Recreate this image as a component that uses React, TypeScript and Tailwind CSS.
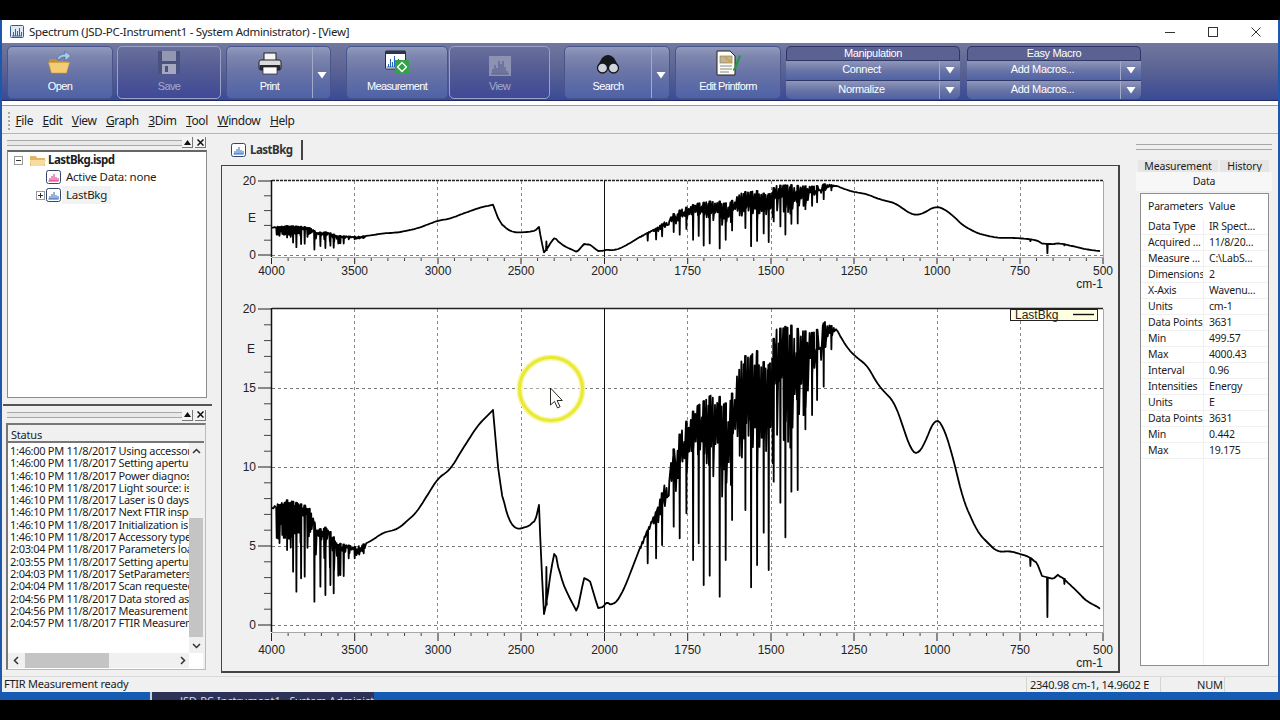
import React from "react";

// ---------- spectrum data (page pixel coordinates of the large plot) ----------
const envPts: [number, number][] = [
  [272,505],[287,500],[310,507],[316,530],[327,527],[337,543],[355,547],[370,542],[382,533],[398,529],[417,512],[438,478],[450,470],[462,450],[478,425],[493,410],
  [498,467],[502,495],[507,517],[513,527],[518,530],[527,526],[532,526],[536,518],[539,505],[541,557],[544,614],[547,600],[551,570],[555,550],[560,577],[568,595],[577,612],[584,578],[590,581],[598,608],[603,607],[607,602],[613,607],[623,592],[643,540],[658,507],[667,473],[675,443],[685,423],[695,408],[707,398],[715,392],[727,405],[735,385],[742,355],[750,357],[755,350],[760,353],[767,372],[775,330],[790,325],[800,330],[813,333],[825,322],[837,330],[847,348],[857,358],[867,365],[878,385],[895,403],[903,427],[912,453],[918,455],[925,443],[935,417],[943,425],[953,457],[963,500],[978,533],[997,552],[1010,551],[1030,557],[1037,563],[1042,576],[1046,577],[1053,579],[1059,574],[1068,583],[1078,592],[1087,602],[1093,604],[1102,610],
];
const interp = (t: [number, number][], x: number) => {
  for (let i = 1; i < t.length; i++) if (x <= t[i][0]) {
    const [a, b] = t[i - 1]; const [c, d] = t[i];
    return b + ((d - b) * (x - a)) / (c - a);
  }
  return t[t.length - 1][1];
};
const smoothZones = [[360,486],[503,534],[560,573],[610,640],[840,1036],[1060,1100]];
const envAt = (x: number) => {
  if (!smoothZones.some(([a, b]) => x >= a && x <= b)) return interp(envPts, x);
  let s = 0;
  for (let k = -5; k <= 5; k++) s += interp(envPts, x + k);
  return s / 11;
};
const solid: [number, number][] = [[640,560],[660,520],[670,500],[700,490],[730,500],[745,500],[770,470],[790,450],[810,400],[822,360],[832,335]];
const spikes: [number, number][] = [
  ...[[80,480],[98,545],[108,605],[122,565],[133,560],[162,635],[180,590],[195,615],[210,585],[220,610],[240,555],[250,558],[265,505],[283,505],[310,490]].map(([a, b]) => [260 + a / 3, 390 + b / 3] as [number, number]),
  [546,567],[1030,566],[1047,617],[1064,584],
  ...[[22,760],[47,745],[65,705],[100,650],[118,685],[138,610],[158,750],[175,700],[190,825],[208,797],[238,860],[256,750],[275,630],[315,600],[332,832],[350,765],[370,668],[385,780],[400,515],[420,578],[435,682],[453,545],[472,540],[495,358],[515,315],[530,270],[550,230],[573,118]].map(([a, b]) => [640 + a / 3, 310 + b / 3] as [number, number]),
];
let seed = 17;
const rnd = () => { seed = (seed * 16807) % 2147483647; return (seed % 1000) / 1000; };
const build = () => {
  const ev: { x: number; y: number | null }[] = spikes.map(([x, y]) => ({ x, y }));
  for (let x = 272; x <= 1102; x += x > 640 && x < 835 ? 2.2 : x < 360 ? 1.4 : 2) ev.push({ x, y: null });
  ev.push({ x: 493, y: null }, { x: 539, y: null }, { x: 544, y: null });
  ev.sort((a, b) => a.x - b.x);
  const out: [number, number][] = [];
  for (const { x, y } of ev) {
    const e = envAt(x);
    if (y !== null) { out.push([x, e], [x + 0.4, y], [x + 0.8, e]); continue; }
    let low = e;
    if (x >= 276 && x < 310) low = e + 8 + rnd() * 40;
    else if (x >= 310 && x < 340) low = e + rnd() * 38;
    else if (x >= 340 && x < 365) low = e + rnd() * 10;
    else if (x >= 652 && x < 835) low = e + (0.35 + rnd() * 0.65) * Math.max(0, interp(solid, x) - e);
    else if (x >= 640 && x < 652) low = e + rnd() * 6;
    const dense = x > 660 && x < 830;
    out.push([x, e + (dense ? rnd() * rnd() * 32 : x < 365 ? rnd() * 4 : 0)]);
    if (low !== e) out.push([x + 0.5, low]);
  }
  return out;
};
const data = build();
const bigLine = data.map(([x, y]) => `${x.toFixed(1)},${y.toFixed(1)}`).join(" ");
const smallLine = data.map(([x, y]) => `${x.toFixed(1)},${(181 + ((y - 309) * 74) / 316).toFixed(1)}`).join(" ");

const xLabels: [number, string][] = [[271.5,"4000"],[354.7,"3500"],[438,"3000"],[521,"2500"],[604.5,"2000"],[687.7,"1750"],[771,"1500"],[854,"1250"],[937,"1000"],[1020,"750"],[1103,"500"]];
const gridX = [354.5, 437.5, 521.5, 687.5, 771.5, 854.5, 937.5, 1020.5];
const minorX = Array.from({ length: 51 }, (_, i) => 271.5 + i * 16.63).filter((_, i) => i % 5 !== 0);

function Plot({ top, zero, bottom, axisY, labelY, cmY, big }: { top: number; zero: number; bottom: number; axisY: number; labelY: number; cmY: number; big: boolean }) {
  const h = zero - top;
  const tickYs = Array.from({ length: big ? 21 : 6 }, (_, i) => top + (i * h) / (big ? 20 : 5));
  const majors = big ? [0, 5, 10, 15, 20] : [0, 5];
  const hGrid = big ? [388.5, 467.5, 546.5, 625.5] : [zero + 0.5];
  return (
    <g>
      <rect x={272} y={top} width={831} height={bottom - top} fill="#fff" />
      <line x1={1103.5} x2={1103.5} y1={top} y2={bottom} stroke="#a8a8a8" />
      <line x1={272} x2={1104} y1={bottom + 0.5} y2={bottom + 0.5} stroke="#a8a8a8" />
      {gridX.map((x) => <line key={x} x1={x} x2={x} y1={top} y2={bottom} stroke="#8a8a8a" strokeDasharray="3 3" />)}
      {hGrid.map((y) => <line key={y} x1={272} x2={1103} y1={y} y2={y} stroke="#7a7a7a" strokeDasharray="3 3" />)}
      <line x1={272} x2={1103} y1={top - 0.5} y2={top - 0.5} stroke="#222" strokeWidth={1.6} strokeDasharray={big ? undefined : "3 1"} />
      <line x1={604.5} x2={604.5} y1={big ? top - 1 : top} y2={bottom} stroke="#111" />
      <polyline points={big ? bigLine : smallLine} fill="none" stroke="#000" strokeWidth={1.8} strokeLinejoin="round" />
      <line x1={271.5} x2={271.5} y1={top - 1} y2={bottom} stroke="#111" strokeWidth={1.5} />
      {tickYs.map((y, i) => {
        const major = majors.includes(i);
        return <line key={i} x1={major ? 258 : 264} x2={271} y1={y} y2={y} stroke={major ? "#222" : "#444"} />;
      })}
      {xLabels.map(([x]) => <line key={x} x1={x} x2={x} y1={axisY} y2={axisY + (big ? 8 : 6)} stroke="#222" />)}
      {minorX.map((x) => <line key={x} x1={x} x2={x} y1={axisY} y2={axisY + 3} stroke="#444" />)}
      {xLabels.map(([x, t]) => <text key={t} x={x} y={labelY} textAnchor="middle" fontSize={12} fill="#222">{t}</text>)}
      <text x={1103} y={cmY} textAnchor="end" fontSize={12} fill="#222">cm-1</text>
    </g>
  );
}

function Chart() {
  return (
    <svg viewBox="222 166 896 505" className="block w-[896px] h-[505px] font-['Liberation_Sans',sans-serif]">
      <Plot top={181} zero={255} bottom={257} axisY={258} labelY={275} cmY={288} big={false} />
      <g fontSize={12} fill="#222" textAnchor="end">
        <text x={256} y={185}>20</text>
        <text x={256} y={259}>0</text>
        <text x={256} y={222}>E</text>
      </g>
      <Plot top={309} zero={625} bottom={632} axisY={633} labelY={654} cmY={667} big />
      <g fontSize={12} fill="#222" textAnchor="end">
        <text x={256} y={313}>20</text>
        <text x={255} y={353}>E</text>
        <text x={256} y={392}>15</text>
        <text x={256} y={471}>10</text>
        <text x={256} y={550}>5</text>
        <text x={256} y={629}>0</text>
      </g>
      <rect x={1010.5} y={309.5} width={87} height={11} fill="#ffffe1" stroke="#222" />
      <text x={1015} y={319} fontSize={12} fill="#222">LastBkg</text>
      <line x1={1073} x2={1094} y1={314.5} y2={314.5} stroke="#111" strokeWidth={1.4} />
      <circle cx={551} cy={389} r={31.5} fill="#fffffa" fillOpacity={0.35} stroke="#f6f6a0" strokeWidth={6} />
      <circle cx={551} cy={389} r={31.5} fill="none" stroke="#e9e931" strokeWidth={3} />
      <path d="M550.5 388 v17 l4-3.6 3 6.5 2.6-1.2-3-6.2 h5.2 Z" fill="#fff" stroke="#111" strokeWidth={0.9} strokeLinejoin="round" />
    </svg>
  );
}

// ---------- icons ----------
const Open = () => (
  <svg width="26" height="26" viewBox="0 0 26 26">
    <path d="M2 9h7l2 2h9v12H4Z" fill="#c98f2e" />
    <path d="M1.5 12.5h21l-3 10.5H4.5Z" fill="#f3cd76" stroke="#c89a3f" strokeWidth=".6" />
    <path d="M10 9c2-4 5-5 8-5V1l6 5-6 5V7c-3 0-5 1-6.5 3Z" fill="#a9c9e4" stroke="#3e6d97" strokeWidth=".7" />
  </svg>
);
const Save = () => (
  <svg width="24" height="26" viewBox="0 0 24 26">
    <path d="M1 1h22v23H1Z" fill="#4a5280" />
    <rect x="5" y="1" width="14" height="10" fill="#9497b2" />
    <rect x="5" y="14" width="14" height="10" fill="#a5a8bf" />
    <rect x="8" y="16" width="3" height="6" fill="#4a5280" />
  </svg>
);
const Print = () => (
  <svg width="24" height="24" viewBox="0 0 24 24">
    <rect x="6" y="1" width="12" height="8" fill="#f4f4f4" stroke="#222" />
    <rect x="1" y="8" width="22" height="10" rx="2" fill="#d9d9de" stroke="#222" />
    <rect x="1.5" y="13" width="21" height="5" rx="1" fill="#26282f" />
    <rect x="5" y="15" width="14" height="7" fill="#fafafa" stroke="#222" strokeWidth=".7" />
  </svg>
);
const Bars = ({ c }: { c: string }) => (
  <path d={`M3 16h17M5 16v-3M7 16V8M9 16v-5M11 16V5M13 16v-7M15 16V8M17 16v-4`} stroke={c} strokeWidth="1.1" fill="none" />
);
const Measure = () => (
  <svg width="26" height="26" viewBox="0 0 26 26">
    <rect x="1.5" y="1" width="20" height="18" rx="1" fill="#fff" stroke="#222a44" />
    <rect x="1.5" y="1" width="20" height="3" fill="#2b3350" />
    <g transform="translate(-.5 1)"><Bars c="#2a66b8" /></g>
    <rect x="11" y="10" width="14" height="14" fill="#35a24a" />
    <path d="M18 12.5l4.5 4.5-4.5 4.5-4.5-4.5Z" fill="none" stroke="#fff" strokeWidth="1.3" />
  </svg>
);
const ViewI = () => (
  <svg width="22" height="20" viewBox="0 0 22 20">
    <rect x="0" y="0" width="22" height="20" fill="#8d92b3" />
    <path d="M2 18h18M4 18v-5M6 18V9M8 18v-6M10 18V5M12 18V8M14 18V5M16 18v-7M18 18v-3" stroke="#5b628f" strokeWidth="1.2" />
  </svg>
);
const Binoc = () => (
  <svg width="24" height="22" viewBox="0 0 24 22">
    <path d="M6 4c2-2 4-3 6-3s4 1 6 3l5 9H1Z" fill="#17181d" />
    <circle cx="6.5" cy="14" r="5" fill="#cfd3dc" stroke="#17181d" strokeWidth="1.3" />
    <circle cx="17.5" cy="14" r="5" fill="#cfd3dc" stroke="#17181d" strokeWidth="1.3" />
  </svg>
);
const EditI = () => (
  <svg width="26" height="26" viewBox="0 0 26 26">
    <path d="M2 1h13l5 5v19H2Z" fill="#fdfdf4" stroke="#222" />
    <rect x="5" y="6" width="12" height="7" fill="#c7b48a" stroke="#777" strokeWidth=".6" />
    <path d="M5 16h12M5 19h12M5 22h9" stroke="#888" />
    <path d="M18 19l1-1 5-13 2 1-5 13-3 2Z" fill="#1f9c3f" />
    <path d="M10 7l7 6" stroke="#d6a12a" strokeWidth="1.6" />
  </svg>
);
const Tri = () => <svg width="10" height="8" viewBox="0 0 10 8"><path d="M.5 1h9L5 7.5Z" fill="#fff" /></svg>;

const btnOn = "bg-[linear-gradient(#929abd_0%,#7d86ae_18%,#6974a6_50%,#4f62a6_100%)] border-[#48548c]";
const btnOff = "bg-[linear-gradient(#6a709c_0%,#565d94_40%,#3f4996_100%)] border-[#9aa0c6]";

function RibbonBtn({ w, ml, label, icon, off, drop }: { w: string; ml: string; label: string; icon: React.ReactNode; off?: boolean; drop?: boolean }) {
  return (
    <div className={`${w} ${ml} h-[53px] rounded-[5px] border flex ${off ? btnOff : btnOn}`}>
      <div className="flex-1 min-w-0 flex flex-col items-center">
        <div className="h-[31px] flex items-end pb-[2px]">{icon}</div>
        <div className={`text-[11px] leading-[16px] tracking-[-0.65px] font-['Liberation_Sans',sans-serif] ${off ? "text-[#a6abcb]" : "text-white"}`}>{label}</div>
      </div>
      {drop && <div className="w-[18px] border-l border-[#a3a9c8] flex items-center justify-center pt-[4px]"><Tri /></div>}
    </div>
  );
}

function Combo({ ml, title, a, b }: { ml: string; title: string; a: string; b: string }) {
  const Row = ({ t, last }: { t: string; last?: boolean }) => (
    <div className={`h-[20px] flex text-white border-t border-[#2d3666] bg-[linear-gradient(#8f97ba_0%,#6a75a6_50%,#4f62a6_100%)] ${last ? "rounded-b-[5px]" : ""}`}>
      <div className="flex-1 text-center leading-[17px] text-[11px] tracking-[-0.35px] pr-[2px]">{t}</div>
      <div className="w-[21px] border-l border-[#a3a9c8] flex items-center justify-center pr-[1px]"><Tri /></div>
    </div>
  );
  return (
    <div className={`${ml} w-[174px] h-[53px] flex flex-col font-['Liberation_Sans',sans-serif]`}>
      <div className="h-[14px] rounded-t-[5px] border border-b-0 border-[#2d3666] bg-[#5b6190] text-center text-[11px] leading-[13px] tracking-[-0.35px] text-white">{title}</div>
      <Row t={a} />
      <Row t={b} last />
    </div>
  );
}

const U = ({ a, b }: { a: string; b: string }) => <span><span className="underline">{a}</span>{b}</span>;

const Grip = ({ w }: { w: string }) => (
  <div className={`${w} h-[6px] border-y border-[#a8a8a8] bg-[#e8e8e8]`} />
);
const PaneBtns = () => (
  <div className="flex gap-[2px]">
    <div className="w-[11px] h-[11px] border-r border-b border-[#777] bg-[#f4f4f4] flex items-center justify-center"><svg width="7" height="5" viewBox="0 0 7 5"><path d="M3.5 0l3.5 5H0Z" fill="#111" /></svg></div>
    <div className="w-[11px] h-[11px] border-r border-b border-[#777] bg-[#f4f4f4] flex items-center justify-center"><svg width="7" height="7" viewBox="0 0 7 7"><path d="M.5.5l6 6M6.5.5l-6 6" stroke="#111" strokeWidth="1.5" /></svg></div>
  </div>
);

const TreeChart = ({ c }: { c: string }) => (
  <svg width="15" height="14" viewBox="0 0 15 14">
    <rect x=".5" y=".5" width="14" height="13" rx="2" fill="#fff" stroke="#33456a" />
    <path d={`M2.5 11h10M4 11V8M6 11V6M8 11V4M10 11V7M12 11V8`} stroke={c} />
  </svg>
);

const statusLines = [
  "1:46:00 PM 11/8/2017 Using accessory", "1:46:00 PM 11/8/2017 Setting aperture", "1:46:10 PM 11/8/2017 Power diagnostics", "1:46:10 PM 11/8/2017 Light source: is ok",
  "1:46:10 PM 11/8/2017 Laser is 0 days old", "1:46:10 PM 11/8/2017 Next FTIR inspection", "1:46:10 PM 11/8/2017 Initialization is successful", "1:46:10 PM 11/8/2017 Accessory type is",
  "2:03:04 PM 11/8/2017 Parameters loaded", "2:03:55 PM 11/8/2017 Setting aperture", "2:04:03 PM 11/8/2017 SetParameters Completed", "2:04:04 PM 11/8/2017 Scan requested",
  "2:04:56 PM 11/8/2017 Data stored as data", "2:04:56 PM 11/8/2017 Measurement LastBkg", "2:04:57 PM 11/8/2017 FTIR Measurement ready",
];
const rows: [string, string][] = [
  ["Data Type","IR Spect..."],["Acquired ...","11/8/20..."],["Measure ...","C:\\LabS..."],["Dimensions","2"],["X-Axis","Wavenu..."],["Units","cm-1"],["Data Points","3631"],["Min","499.57"],["Max","4000.43"],["Interval","0.96"],["Intensities","Energy"],["Units","E"],["Data Points","3631"],["Min","0.442"],["Max","19.175"],
];
const Chev = ({ d }: { d: string }) => <svg width="9" height="9" viewBox="0 0 9 9"><path d={d} fill="none" stroke="#333" strokeWidth="1.5" /></svg>;

export default function App() {
  return (
    <div className="w-[1280px] h-[720px] bg-black flex flex-col overflow-hidden font-['Noto_Sans',sans-serif] text-[#1c1c1c]">
      <div className="h-[20px] shrink-0 bg-black" />
      <div className="h-[680px] shrink-0 flex flex-col border-x-2 border-[#1d58ad] bg-[#f0f0f0]">
        {/* title bar */}
        <div className="h-[23px] shrink-0 bg-white flex items-center">
          <div className="ml-[8px] mr-[5px]"><svg width="14" height="13" viewBox="0 0 14 13"><rect x=".5" y=".5" width="13" height="12" rx="1" fill="#dfe8f5" stroke="#3b5a8e" /><path d="M2 11h10M3.5 11V7M5.5 11V4M7.5 11V6M9.5 11V3M11.5 11V7" stroke="#2a66b8" /></svg></div>
          <span className="text-[11.5px] leading-[16px] tracking-[-0.31px] text-[#222]">Spectrum (JSD-PC-Instrument1 - System Administrator) - [View]</span>
          <div className="ml-auto flex items-center">
            <svg width="10" height="10" viewBox="0 0 10 10" className="mr-[33px]"><path d="M0 5.5h10" stroke="#333" /></svg>
            <svg width="10" height="10" viewBox="0 0 10 10" className="mr-[33px]"><rect x=".5" y=".5" width="9" height="9" fill="none" stroke="#333" /></svg>
            <svg width="10" height="10" viewBox="0 0 10 10" className="mr-[17px]"><path d="M.5.5l9 9M9.5.5l-9 9" stroke="#333" /></svg>
          </div>
        </div>
        {/* ribbon */}
        <div className="h-[58px] shrink-0 bg-[linear-gradient(#72789f_0%,#5c6494_45%,#3a4a95_100%)] border-b border-[#1e2a66] flex items-start pt-[3px] pl-[5px]">
          <RibbonBtn w="w-[106px]" ml="" label="Open" icon={<Open />} />
          <RibbonBtn w="w-[104px]" ml="ml-[4px]" label="Save" icon={<Save />} off />
          <RibbonBtn w="w-[105px]" ml="ml-[5px]" label="Print" icon={<Print />} drop />
          <RibbonBtn w="w-[102px]" ml="ml-[15px]" label="Measurement" icon={<Measure />} />
          <RibbonBtn w="w-[101px]" ml="ml-[1px]" label="View" icon={<ViewI />} off />
          <RibbonBtn w="w-[106px]" ml="ml-[14px]" label="Search" icon={<Binoc />} drop />
          <RibbonBtn w="w-[106px]" ml="ml-[5px]" label="Edit Printform" icon={<EditI />} />
          <Combo ml="ml-[5px]" title="Manipulation" a="Connect" b="Normalize" />
          <Combo ml="ml-[7px]" title="Easy Macro" a="Add Macros..." b="Add Macros..." />
        </div>
        <div className="h-[5px] shrink-0 bg-white border-b border-[#9a9a9a]" />
        {/* menu */}
        <div className="h-[28px] shrink-0 flex items-center border-b border-[#b5b5b5] pl-[6px] pt-[3px] gap-[9.5px] text-[12px] tracking-[-0.42px]">
          <div className="w-[3px] h-[18px] border-l-2 border-dotted border-[#aaa] -mr-[5px]" />
          <U a="F" b="ile" /><U a="E" b="dit" /><U a="V" b="iew" /><U a="G" b="raph" /><U a="3" b="Dim" /><U a="T" b="ool" /><U a="W" b="indow" /><U a="H" b="elp" />
        </div>
        {/* main */}
        <div className="h-[542px] shrink-0 flex">
          {/* left */}
          <div className="w-[212px] shrink-0 flex flex-col border-r border-transparent">
            <div className="h-[15px] mt-[1px] flex items-center pl-[5px] pr-[7px] justify-between">
              <Grip w="w-[175px]" />
              <PaneBtns />
            </div>
            <div className="ml-[5px] w-[200px] h-[248px] bg-white border border-[#8c8c8c] border-t-2 border-t-[#666] text-[11.5px] tracking-[-0.25px]">
              <div className="h-[16px] flex items-center pl-[6px]">
                <svg width="9" height="9" viewBox="0 0 9 9" className="mr-[6px]"><rect x=".5" y=".5" width="8" height="8" fill="#fff" stroke="#999" /><path d="M2 4.5h5" stroke="#333" /></svg>
                <svg width="18" height="13" viewBox="0 0 18 13"><path d="M1 2h6l1 2h8v8H1Z" fill="#e3b667" /><path d="M1 6h16l-2 6H2Z" fill="#f8dc9c" /></svg>
                <span className="font-bold ml-[1px] tracking-[-0.55px]">LastBkg.ispd</span>
              </div>
              <div className="h-[18px] flex items-center pl-[38px]">
                <TreeChart c="#d6287f" /><span className="ml-[5px]">Active Data: none</span>
              </div>
              <div className="h-[18px] flex items-center pl-[28px]">
                <svg width="9" height="9" viewBox="0 0 9 9" className="mr-[1px]"><rect x=".5" y=".5" width="8" height="8" fill="#fff" stroke="#999" /><path d="M2 4.5h5M4.5 2v5" stroke="#333" /></svg>
                <TreeChart c="#2a66b8" /><span className="ml-[1px] px-[4px] bg-[#f2f2f2]">LastBkg</span>
              </div>
            </div>
            <div className="h-[2px] mt-[6px] w-[209px] bg-[#555] ml-[1px]" />
            <div className="h-[16px] mt-[1px] flex items-center pl-[5px] pr-[7px] justify-between">
              <Grip w="w-[175px]" />
              <PaneBtns />
            </div>
            <div className="ml-[4px] w-[200px] h-[247px] border border-[#bbb] border-t-2 border-l-2 border-t-[#777] border-l-[#777] flex flex-col">
              <div className="h-[16px] shrink-0 pl-[3px] text-[11px] leading-[20px] tracking-[-0.2px]">Status</div>
              <div className="h-[2px] shrink-0 bg-[#777] mr-[1px]" />
              <div className="flex-1 flex flex-col bg-white mr-[2px] min-h-0">
                <div className="h-[210px] flex min-h-0">
                  <div className="flex-1 min-w-0 overflow-hidden pt-[2px] text-[11px] leading-[12.3px] tracking-[-0.3px] whitespace-nowrap pl-[2px]">
                    {statusLines.map((s, i) => <div key={i} className="h-[12.3px]">{s}</div>)}
                  </div>
                  <div className="w-[14px] shrink-0 bg-[#f0f0f0] flex flex-col items-center">
                    <div className="h-[16px] flex items-center"><Chev d="M1 6l3.5-3.5L8 6" /></div>
                    <div className="h-[59px] w-full" />
                    <div className="h-[119px] w-full bg-[#c4c4c4]" />
                    <div className="flex-1 flex items-center"><Chev d="M1 3l3.5 3.5L8 3" /></div>
                  </div>
                </div>
                <div className="h-[15px] shrink-0 bg-[#f0f0f0] flex items-center mr-[14px]">
                  <div className="w-[17px] flex justify-center"><Chev d="M6 1L2.5 4.5 6 8" /></div>
                  <div className="w-[84px] h-full bg-[#c4c4c4]" />
                  <div className="flex-1 flex justify-end pr-[2px]"><Chev d="M3 1l3.5 3.5L3 8" /></div>
                </div>
              </div>
            </div>
          </div>
          {/* center */}
          <div className="w-[907px] shrink-0 pl-[7px] flex flex-col">
            <div className="h-[31px] shrink-0 flex items-end pl-[6px]">
              <div className="h-[20px] w-[76px] mb-[5px] flex items-center border-r-2 border-[#444] pl-[4px] text-[11.5px] font-bold tracking-[-0.5px] text-[#333]">
                <TreeChart c="#2a66b8" /><span className="ml-[4px]">LastBkg</span>
              </div>
            </div>
            <div className="w-[899px] h-[508px] border-l border-t border-r-2 border-b-2 border-[#444]">
              <Chart />
            </div>
          </div>
          {/* right */}
          <div className="flex-1 min-w-0 flex flex-col">
            <div className="h-[6px] mt-[10px] ml-[15px] mr-[6px] border-y border-[#a8a8a8]" />
            <div className="h-[12px] mt-[10px] ml-[17px] flex text-[10.5px] leading-[12px] tracking-[-0.15px]">
              <div className="w-[80px] bg-[#e6e6e6] text-center rounded-t-[1px]">Measurement</div>
              <div className="w-[49px] ml-[2px] bg-[#e6e6e6] text-center rounded-t-[1px]">History</div>
            </div>
            <div className="ml-[15px] mr-[6px] h-[19px] bg-[#f7f7f7] text-center text-[10.5px] leading-[19px] tracking-[-0.15px]">Data</div>
            <div className="ml-[19px] mr-[9px] mt-[2px] h-[473px] bg-white border border-[#8f8f8f] text-[10.5px] tracking-[-0.2px] flex flex-col">
              <div className="h-[25px] shrink-0 flex items-center">
                <div className="w-[63px] pl-[7px]">Parameters</div>
                <div className="pl-[5px]">Value</div>
              </div>
              {rows.map(([a, b], i) => (
                <div key={i} className="h-[16px] shrink-0 flex items-center border-b border-[#f1f1f1]">
                  <div className="w-[63px] h-full border-r border-[#f1f1f1] pl-[7px] leading-[15px] whitespace-nowrap overflow-hidden">{a}</div>
                  <div className="pl-[5px] leading-[15px] whitespace-nowrap">{b}</div>
                </div>
              ))}
              <div className="flex-1 ml-[62px] border-l border-[#f1f1f1]" />
            </div>
          </div>
        </div>
        {/* status bar */}
        <div className="h-[16px] shrink-0 flex items-center text-[11px] tracking-[-0.23px] border-t border-[#dadada]">
          <div className="pl-[2px] w-[1024px]">FTIR Measurement ready</div>
          <div className="pl-[3px] w-[134px] border-l border-[#d4d4d4] h-full leading-[15px]">2340.98 cm-1, 14.9602 E</div>
          <div className="w-[30px] border-l border-[#d4d4d4] h-full" />
          <div className="w-[34px] pl-[7px] h-full leading-[15px]">NUM</div>
          <div className="w-[34px] border-l border-[#d4d4d4] h-full" />
        </div>
        {/* strip of the desktop taskbar behind the window */}
        <div className="flex-1 min-h-0 bg-[#155bb3] flex overflow-hidden">
          <div className="w-[148px] shrink-0" />
          <div className="w-[2px] shrink-0 bg-[#c9cfe0]" />
          <div className="w-[222px] shrink-0 bg-[#2c3158] pl-[28px] pt-[2px] text-[11px] leading-[14px] tracking-[-0.1px] text-[#d5d9ea] whitespace-nowrap overflow-hidden">JSD-PC-Instrument1 - System Administrator</div>
        </div>
      </div>
      <div className="h-[20px] shrink-0 bg-black" />
    </div>
  );
}
